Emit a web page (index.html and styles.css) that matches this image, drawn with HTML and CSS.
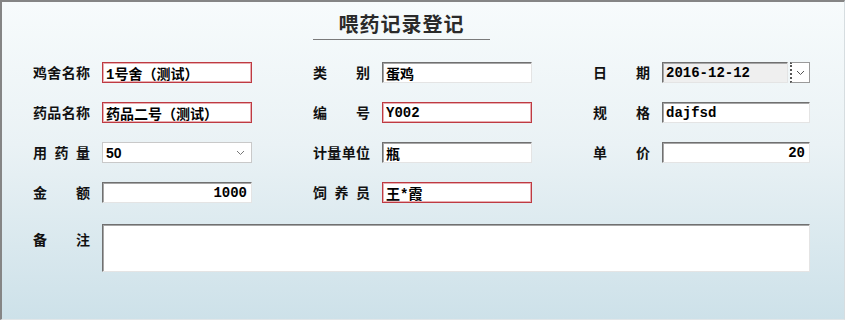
FILE: index.html
```html
<!DOCTYPE html>
<html lang="zh-CN">
<head>
  <meta charset="UTF-8">
  <title>喂药记录登记</title>
  <link rel="stylesheet" href="styles.css">
</head>
<body>
  <div class="window">
    <div class="title">喂药记录登记</div>

    <div class="form">
      <div class="row">
        <div class="field">
          <label class="lbl">鸡舍名称</label>
          <input class="box required" value="1号舍（测试）">
        </div>
        <div class="field">
          <label class="lbl">类别</label>
          <input class="box" value="蛋鸡">
        </div>
        <div class="field last">
          <label class="lbl">日期</label>
          <div class="date">
            <input class="box disabled" value="2016-12-12">
            <span class="drop-btn">
              <svg width="9" height="6" viewBox="0 0 9 6"><path d="M1 1 L4.5 4.5 L8 1" fill="none" stroke="#555" stroke-width="1"/></svg>
            </span>
          </div>
        </div>
      </div>

      <div class="row">
        <div class="field">
          <label class="lbl">药品名称</label>
          <input class="box required" value="药品二号（测试）">
        </div>
        <div class="field">
          <label class="lbl">编号</label>
          <input class="box required" value="Y002">
        </div>
        <div class="field last">
          <label class="lbl">规格</label>
          <input class="box" value="dajfsd">
        </div>
      </div>

      <div class="row">
        <div class="field">
          <label class="lbl">用药量</label>
          <div class="combo">
            <span class="combo-val">50</span>
            <svg width="9" height="6" viewBox="0 0 9 6"><path d="M1 1 L4.5 4.5 L8 1" fill="none" stroke="#777" stroke-width="1"/></svg>
          </div>
        </div>
        <div class="field">
          <label class="lbl">计量单位</label>
          <input class="box" value="瓶">
        </div>
        <div class="field last">
          <label class="lbl">单价</label>
          <input class="box num" value="20">
        </div>
      </div>

      <div class="row">
        <div class="field">
          <label class="lbl">金额</label>
          <input class="box num" value="1000">
        </div>
        <div class="field">
          <label class="lbl">饲养员</label>
          <input class="box required" value="王*霞">
        </div>
      </div>

      <div class="row remark">
        <label class="lbl">备注</label>
        <textarea class="box memo"></textarea>
      </div>
    </div>
  </div>
</body>
</html>
```

FILE: styles.css
```css
* {
  margin: 0;
  padding: 0;
  box-sizing: border-box;
}

body {
  width: 845px;
  height: 320px;
  overflow: hidden;
  font-family: "Noto Sans CJK SC", sans-serif;
}

.window {
  width: 845px;
  height: 320px;
  border-top: 2px solid #858585;
  border-left: 2px solid #858585;
  border-right: 1px solid #d6dde0;
  border-bottom: 1px solid #e2e6e8;
  background: linear-gradient(to bottom, #f7fbfc 0%, #eaf2f5 45%, #cde1e9 100%);
}

.title {
  margin-left: 311px;
  width: 177px;
  height: 38px;
  padding-top: 9px;
  text-align: center;
  font-size: 20px;
  line-height: 26px;
  font-weight: bold;
  letter-spacing: 1px;
  color: #2a2a2a;
  border-bottom: 1px solid #7a7a7a;
}

.form {
  margin-top: 22px;
  padding-left: 31px;
  display: flex;
  flex-direction: column;
  gap: 19px;
}

.row {
  display: flex;
  gap: 61px;
  height: 21px;
}

.field {
  display: flex;
  align-items: center;
  gap: 12px;
}

.lbl {
  width: 57px;
  font-size: 14px;
  font-weight: bold;
  color: #111;
  line-height: 21px;
  text-align: justify;
  text-align-last: justify;
  white-space: nowrap;
}

.box {
  width: 150px;
  height: 21px;
  padding: 0 3px;
  font-family: "Liberation Mono", "Noto Sans CJK SC", monospace;
  font-size: 14px;
  font-weight: bold;
  color: #000;
  background: #fff;
  border: 1px solid;
  border-color: #707070 #e4e4e4 #e4e4e4 #707070;
  box-shadow: inset 1px 1px 0 #a6a6a6;
  outline: none;
}

.box.required {
  border: 1px solid #be3a42;
  box-shadow: inset 0 0 0 1px #e9aeb1;
}

.box.num {
  text-align: right;
  padding-right: 4px;
}

.box.disabled {
  width: 126px;
  background: #efefef;
}

.date {
  display: flex;
  align-items: center;
  gap: 2px;
}

.drop-btn {
  width: 20px;
  height: 21px;
  display: flex;
  align-items: center;
  justify-content: center;
  background: #fff;
  border: 1px solid #9a9a9a;
  border-left: 2px dotted #555;
}

.field.last .box {
  width: 148px;
}

.field.last .date .box {
  width: 126px;
}

.combo {
  width: 150px;
  height: 21px;
  padding: 0 6px 0 3px;
  display: flex;
  align-items: center;
  justify-content: space-between;
  background: #fff;
  border: 1px solid #c9c9c9;
}

.combo-val {
  font-family: "Liberation Sans", sans-serif;
  font-size: 14px;
  font-weight: bold;
}

.row.remark {
  height: 48px;
  gap: 12px;
  margin-top: 2px;
}

.row.remark .lbl {
  padding-top: 5px;
}

.box.memo {
  width: 708px;
  height: 48px;
  resize: none;
}
```
